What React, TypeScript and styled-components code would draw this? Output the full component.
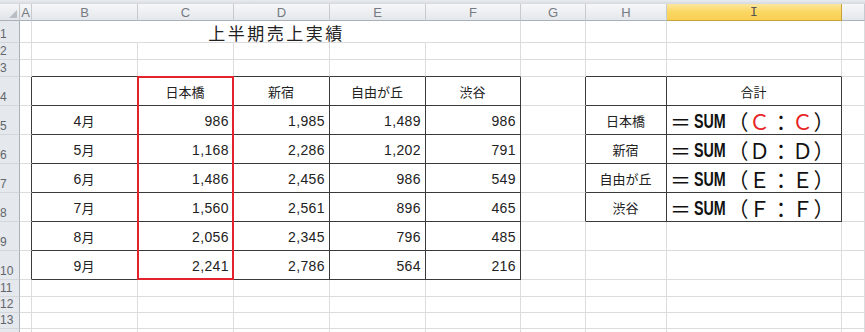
import React from "react";
import styled, { createGlobalStyle, css } from "styled-components";

const Global = createGlobalStyle`
  html, body { margin: 0; padding: 0; background: #ffffff; overflow: hidden; }
  body { width: 865px; height: 332px; font-family: "Liberation Sans", "Noto Sans CJK JP", sans-serif; }
`;

const GRID = "#dadcdd";
const DARK = "#3a3a3a";
const RED = "#e3232b";

const COLS = ["A", "B", "C", "D", "E", "F", "G", "H", "I", "J"];
const COL_W = [12, 106, 96, 96, 96, 95, 65, 81, 175];
const ROW_H = [22, 17, 17, 29, 29, 29, 29, 29, 29, 29, 17, 16, 16, 17];

const Sheet = styled.div`
  width: 865px;
  height: 332px;
  display: flex;
  flex-direction: column;
  overflow: hidden;
  background: #fff;
`;

const TopStrip = styled.div`
  height: 4px;
  flex: none;
  background: linear-gradient(#e9ecef, #d5dae0);
`;

const Grid = styled.div`
  display: grid;
  grid-template-columns: 20px ${COL_W.map((w) => `${w}px`).join(" ")} 1fr;
  grid-template-rows: 17px ${ROW_H.map((h) => `${h}px`).join(" ")};
`;

type Place = { $row: number; $col: number; $span?: number };
const placed = css<Place>`
  grid-row: ${(p) => p.$row};
  grid-column: ${(p) => p.$col} / span ${(p) => p.$span ?? 1};
`;

const Corner = styled.div<Place>`
  ${placed};
  box-sizing: border-box;
  background: linear-gradient(#f4f5f7, #e2e5e9);
  border-right: 1px solid #c3c8ce;
  border-bottom: 1px solid #a9b0b8;
  display: flex;
  align-items: flex-end;
  justify-content: flex-end;
  padding: 0 2px 2px 0;
`;

const ColHead = styled.div<Place & { $sel?: boolean }>`
  ${placed};
  box-sizing: border-box;
  display: flex;
  align-items: center;
  justify-content: center;
  font-family: "Liberation Sans", sans-serif;
  font-size: 13px;
  color: #767b82;
  border-right: 1px solid #c5cad0;
  border-bottom: 1px solid #a9b0b8;
  background: linear-gradient(#f6f7f9, #e4e7eb);
  ${(p) =>
    p.$sel &&
    css`
      background: linear-gradient(#fde7a0, #fbd865 45%, #f8cf52);
      border-right-color: #c9a23c;
      border-bottom-color: #c9a23c;
      color: #555;
      font-family: "Liberation Mono", monospace;
    `}
`;

const RowHead = styled.div<Place>`
  ${placed};
  box-sizing: border-box;
  display: flex;
  align-items: flex-end;
  padding: 0 0 2px 0;
  font-family: "Liberation Sans", sans-serif;
  font-size: 12px;
  line-height: 12px;
  color: #62666c;
  background: #e5e8ec;
  border-right: 1px solid #a9b0b8;
  border-bottom: 1px solid #d3d7dc;
`;

const Cell = styled.div<Place & { $r: string; $b: string; $align: "left" | "center" | "right" }>`
  ${placed};
  box-sizing: border-box;
  min-width: 0;
  display: flex;
  align-items: center;
  justify-content: ${(p) => (p.$align === "left" ? "flex-start" : p.$align === "right" ? "flex-end" : "center")};
  padding: 1px 4px 0 3px;
  border-right: 1px solid ${(p) => p.$r};
  border-bottom: 1px solid ${(p) => p.$b};
  font-size: 13px;
  color: #1a1a1a;
  white-space: nowrap;
`;

const Title = styled.span`
  font-family: "Noto Sans CJK JP", sans-serif;
  font-size: 17px;
  letter-spacing: 2.5px;
  color: #222;
  padding-left: 2px;
`;

const Jp = styled.span`
  font-family: "Noto Sans CJK JP", sans-serif;
  font-size: 13px;
  color: #222;
`;

const Num = styled.span`
  font-family: "Liberation Sans", sans-serif;
  font-size: 14px;
  letter-spacing: 0.4px;
  color: #222;
`;

const Formula = styled.span`
  font-family: "Noto Sans CJK JP", sans-serif;
  font-size: 21px;
  letter-spacing: 0.5px;
  color: #111;
  display: flex;
  align-items: center;
`;

const Sum = styled.span`
  display: inline-block;
  width: 33px;
  margin: 0 1px 0 2px;
  font-family: "Liberation Sans", sans-serif;
  font-weight: 700;
  font-size: 21px;
  letter-spacing: 0;
  transform: scaleX(0.68);
  transform-origin: left center;
`;

const Ref = styled.span<{ $red?: boolean }>`
  color: ${(p) => (p.$red ? "#e8231f" : "#111")};
`;

const RedFrame = styled.div`
  grid-column: 4 / 5;
  grid-row: 5 / 12;
  margin: -1px 0 0 -1px;
  border: 2px solid ${RED};
  pointer-events: none;
`;

const shops = ["日本橋", "新宿", "自由が丘", "渋谷"];
const months = ["4", "5", "6", "7", "8", "9"];
const values = [
  ["986", "1,985", "1,489", "986"],
  ["1,168", "2,286", "1,202", "791"],
  ["1,486", "2,456", "986", "549"],
  ["1,560", "2,561", "896", "465"],
  ["2,056", "2,345", "796", "485"],
  ["2,241", "2,786", "564", "216"],
];
const refs = ["Ｃ", "Ｄ", "Ｅ", "Ｆ"];

const ci = (c: string) => COLS.indexOf(c);
const inT1Cols = (c: string) => ci(c) >= 1 && ci(c) <= 5;
const inT2Cols = (c: string) => c === "H" || c === "I";

function rightColor(r: number, c: string) {
  if (r >= 4 && r <= 10 && ci(c) >= 0 && ci(c) <= 5) return DARK;
  if (r >= 4 && r <= 8 && ci(c) >= 6 && ci(c) <= 8) return DARK;
  return GRID;
}
function bottomColor(r: number, c: string) {
  if (r >= 3 && r <= 10 && inT1Cols(c)) return DARK;
  if (r >= 3 && r <= 8 && inT2Cols(c)) return DARK;
  return GRID;
}

function content(r: number, c: string): { node: React.ReactNode; align: "left" | "center" | "right" } {
  if (r === 4 && inT1Cols(c) && c !== "B") return { node: <Jp>{shops[ci(c) - 2]}</Jp>, align: "center" };
  if (r === 4 && c === "I") return { node: <Jp>合計</Jp>, align: "center" };
  if (r >= 5 && r <= 10) {
    const i = r - 5;
    if (c === "B")
      return {
        node: (
          <span>
            <Num>{months[i]}</Num>
            <Jp>月</Jp>
          </span>
        ),
        align: "center",
      };
    if (ci(c) >= 2 && ci(c) <= 5) return { node: <Num>{values[i][ci(c) - 2]}</Num>, align: "right" };
  }
  if (r >= 5 && r <= 8) {
    const i = r - 5;
    if (c === "H") return { node: <Jp>{shops[i]}</Jp>, align: "center" };
    if (c === "I")
      return {
        node: (
          <Formula>
            ＝<Sum>SUM</Sum>（<Ref $red={i === 0}>{refs[i]}</Ref>：<Ref $red={i === 0}>{refs[i]}</Ref>）
          </Formula>
        ),
        align: "left",
      };
  }
  return { node: null, align: "left" };
}

export default function App() {
  const cells: React.ReactNode[] = [];
  cells.push(
    <Corner key="corner" $row={1} $col={1}>
      <svg width="8" height="8" viewBox="0 0 8 8">
        <polygon points="8,0 8,8 0,8" fill="#b9bec5" />
      </svg>
    </Corner>
  );
  COLS.forEach((c, k) =>
    cells.push(
      <ColHead key={`h${c}`} $row={1} $col={k + 2} $sel={c === "I"}>
        {c === "J" ? "" : c}
      </ColHead>
    )
  );
  ROW_H.forEach((_, idx) => {
    const r = idx + 1;
    const gr = r + 1;
    cells.push(
      <RowHead key={`r${r}`} $row={gr} $col={1}>
        {r <= 13 ? r : ""}
      </RowHead>
    );
    COLS.forEach((c, k) => {
      const gc = k + 2;
      if (r === 1 && k >= 2 && k <= 5) return;
      if (r === 1 && c === "B") {
        cells.push(
          <Cell key={`${c}${r}`} $row={gr} $col={gc} $span={5} $r={GRID} $b={GRID} $align="center">
            <Title>上半期売上実績</Title>
          </Cell>
        );
        return;
      }
      const { node, align } = content(r, c);
      cells.push(
        <Cell key={`${c}${r}`} $row={gr} $col={gc} $r={rightColor(r, c)} $b={bottomColor(r, c)} $align={align}>
          {node}
        </Cell>
      );
    });
  });

  return (
    <>
      <Global />
      <Sheet>
        <TopStrip />
        <Grid>
          {cells}
          <RedFrame />
        </Grid>
      </Sheet>
    </>
  );
}
